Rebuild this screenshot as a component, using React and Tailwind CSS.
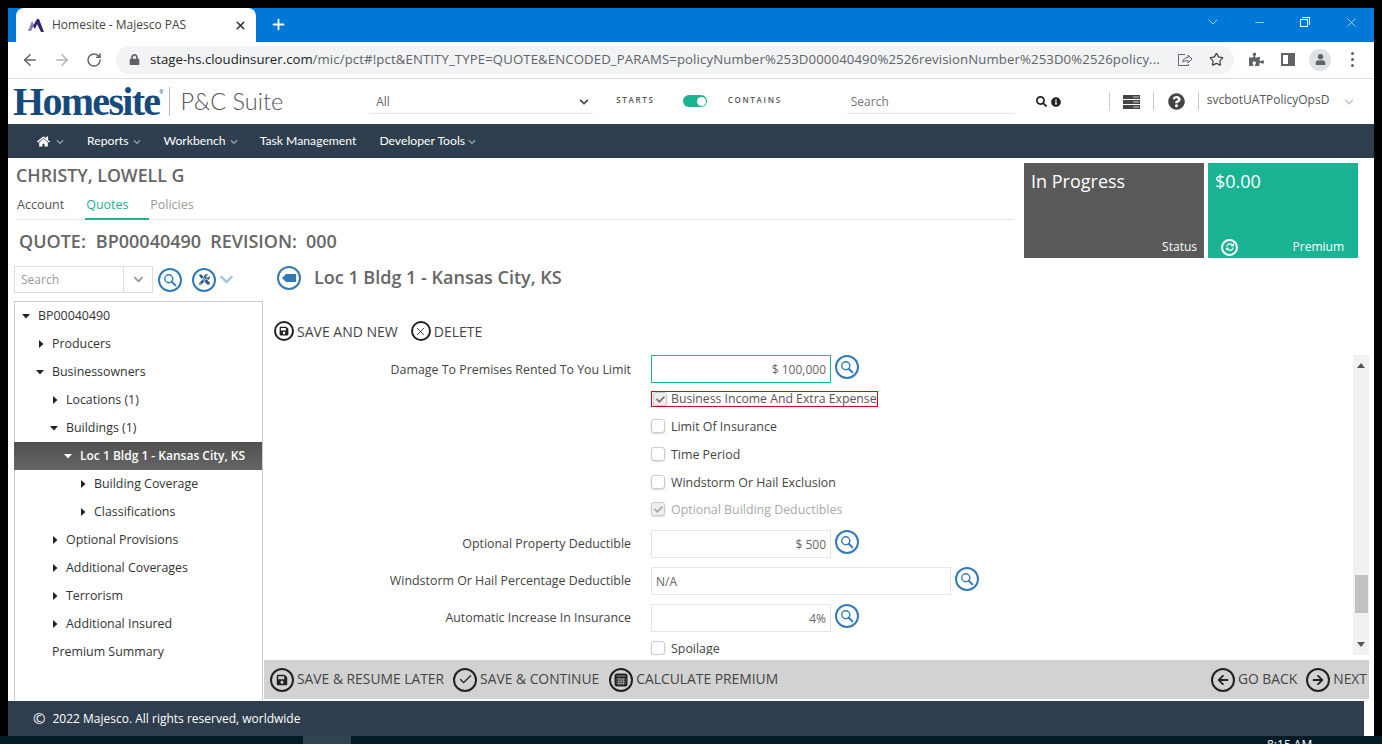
import React from "react";
import { ArrowLeft, ArrowRight, RotateCw, Star, ChevronDown, X, Minus, Plus, Check } from "lucide-react";
import {
  FaHome, FaSearch, FaInfoCircle, FaQuestionCircle, FaLock, FaPuzzlePiece, FaUser, FaCheck, FaSave,
  FaArrowLeft, FaArrowRight, FaSyncAlt, FaTools, FaChevronDown,
} from "react-icons/fa";

const Caret = ({ open, color = "#222" }) => (
  <svg width="8" height="8" viewBox="0 0 8 8" className="shrink-0">
    {open ? <path d="M0 2h8L4 6.5z" fill={color} /> : <path d="M2 0l4.5 4L2 8z" fill={color} />}
  </svg>
);

const NavChevron = () => <FaChevronDown size={8} className="text-[#9aa5b1]" />;

const LookupIcon = () => (
  <span className="flex h-[24px] w-[24px] shrink-0 items-center justify-center rounded-full border-2 border-[#337ab7] bg-white">
    <svg width="14" height="14" viewBox="0 0 14 14" fill="none" stroke="#337ab7">
      <circle cx="5.8" cy="5.8" r="4" strokeWidth="1.4" />
      <path d="M8.8 8.8l3.6 3.6" strokeWidth="2" strokeLinecap="round" />
    </svg>
  </span>
);

const ActionIcon = ({ children, size = "h-[24px] w-[24px]" }) => (
  <span className={`flex ${size} shrink-0 items-center justify-center rounded-full border-2 border-[#222] text-[#222]`}>
    {children}
  </span>
);

const Checkbox = ({ checked, faded }) => (
  <span
    className={`flex h-[14px] w-[14px] shrink-0 items-center justify-center rounded-[3px] border border-[#ccc] shadow-[0_1px_2px_rgba(0,0,0,0.15)] ${
      checked ? "bg-[#eee]" : "bg-white"
    }`}
  >
    {checked && <FaCheck size={9} className={faded ? "text-[#aaa]" : "text-[#777]"} />}
  </span>
);

const treeRows = [
  { label: "BP00040490", pad: "pl-[7px]", gap: "ml-[8px]", open: true },
  { label: "Producers", pad: "pl-[22px]", gap: "ml-[7px]" },
  { label: "Businessowners", pad: "pl-[21px]", gap: "ml-[8px]", open: true },
  { label: "Locations (1)", pad: "pl-[36px]", gap: "ml-[7px]" },
  { label: "Buildings (1)", pad: "pl-[35px]", gap: "ml-[8px]", open: true },
  { label: "Loc 1 Bldg 1 - Kansas City, KS", pad: "pl-[50px]", gap: "ml-[8px]", open: true, active: true },
  { label: "Building Coverage", pad: "pl-[64px]", gap: "ml-[7px]" },
  { label: "Classifications", pad: "pl-[64px]", gap: "ml-[7px]" },
  { label: "Optional Provisions", pad: "pl-[36px]", gap: "ml-[7px]" },
  { label: "Additional Coverages", pad: "pl-[36px]", gap: "ml-[7px]" },
  { label: "Terrorism", pad: "pl-[36px]", gap: "ml-[7px]" },
  { label: "Additional Insured", pad: "pl-[36px]", gap: "ml-[7px]" },
  { label: "Premium Summary", pad: "pl-[37px]", gap: "ml-0", leaf: true },
];

const TreeRow = ({ row }) => (
  <div
    className={`flex h-[28px] items-center ${row.pad} ${
      row.active ? "-ml-px bg-gradient-to-b from-[#505050] to-[#666] text-[12px] font-semibold text-white" : "text-[#333]"
    }`}
  >
    {!row.leaf && <Caret open={row.open} color={row.active ? "#fff" : "#222"} />}
    <span className={row.gap}>{row.label}</span>
  </div>
);

const FieldRow = ({ label, value, wide, left, active, className = "" }) => (
  <div className={`flex items-center ${className}`}>
    <div className={`w-[367px] text-right text-[#444] ${active ? "pt-[2px]" : ""}`}>{label}</div>
    <div
      className={`ml-[20px] flex h-[28px] items-center border px-[4px] pt-[2px] text-[12px] text-[#666] ${
        wide ? "w-[300px]" : "w-[180px]"
      } ${left ? "justify-start" : "justify-end"} ${active ? "border-[#1ab394]" : "border-[#e5e5e5]"}`}
    >
      {value}
    </div>
    <span className="mb-[4px] ml-[4px]">
      <LookupIcon />
    </span>
  </div>
);

const CheckRow = ({ label, checked, faded, className }) => (
  <div className={`ml-[387px] flex items-center gap-[6px] ${faded ? "text-[#aaa]" : "text-[#444]"} ${className}`}>
    <Checkbox checked={checked} faded={faded} />
    <span className="pt-[2px]">{label}</span>
  </div>
);

const CalcIcon = () => (
  <svg width="14" height="14" viewBox="0 0 14 14">
    <rect x="0.5" y="0.5" width="13" height="13" rx="2.5" fill="#222" />
    <path d="M2.5 3h9M2.5 6h9M2.5 8.2h9M2.5 10.4h9M4.7 5v7M7 5v7M9.3 5v7" stroke="#bbb" strokeWidth="0.7" />
  </svg>
);

export default function App() {
  return (
    <div className="flex h-[744px] w-[1382px] flex-col overflow-hidden bg-black pt-[8px] font-['Open_Sans',sans-serif] text-[12px]">
      <div className="mx-[8px] flex flex-1 flex-col overflow-hidden bg-white">
        {/* browser tabs */}
        <div className="flex h-[34px] shrink-0 items-end bg-[#0078d7] text-white">
          <div className="ml-[8px] flex h-[34px] w-[240px] items-center rounded-t-[8px] bg-white pl-[12px] text-[#444]">
            <svg width="17" height="15" viewBox="0 0 17 15">
              <path d="M0 13L4 3l2 4-3 6z" fill="#8f7bb8" />
              <path d="M5 8l4-7h2l5 13h-3L9 6l-2 5z" fill="#2c2570" />
            </svg>
            <span className="ml-[7px] flex-1 text-[12px] leading-none">Homesite - Majesco PAS</span>
            <X size={13} strokeWidth={3} className="mr-[9px] text-[#333]" />
          </div>
          <Plus size={17} strokeWidth={2.5} className="mb-[9px] ml-[14px]" />
          <div className="mb-[12px] ml-auto flex items-center text-white">
            <ChevronDown size={16} strokeWidth={1} className="mr-[32px]" />
            <Minus size={13} strokeWidth={1.2} className="mr-[34px]" />
            <span className="relative mr-[34px] h-[10px] w-[10px]">
              <span className="absolute bottom-0 left-0 h-[8px] w-[8px] border border-white bg-[#0078d7]" />
              <span className="absolute right-0 top-0 h-[8px] w-[8px] border-r border-t border-white" />
            </span>
            <X size={15} strokeWidth={1} className="mr-[15px]" />
          </div>
        </div>

        {/* browser toolbar */}
        <div className="flex h-[37px] shrink-0 items-center border-b border-[#dcdcdc] bg-white pb-[1px] text-[#5f6368]">
          <ArrowLeft size={18} strokeWidth={2} className="ml-[13px]" />
          <ArrowRight size={18} strokeWidth={2} className="ml-[14px] text-[#b0b3b8]" />
          <RotateCw size={16} strokeWidth={2.2} className="ml-[15px]" />
          <div className="ml-[14px] flex h-[28px] w-[1118px] items-center rounded-full bg-[#f1f3f4] pl-[13px]">
            <FaLock size={11} className="shrink-0" />
            <span className="ml-[10px] w-[1016px] shrink-0 whitespace-nowrap text-[13.2px] leading-none">
              <span className="text-[#222]">stage-hs.cloudinsurer.com</span>
              <span className="tracking-[0.11px]">
                /mic/pct#!pct&amp;ENTITY_TYPE=QUOTE&amp;ENCODED_PARAMS=policyNumber%253D000040490%2526revisionNumber%253D0%2526policy...
              </span>
            </span>
            <svg width="16" height="14" viewBox="0 0 16 14" fill="none" stroke="currentColor" className="ml-[11px] shrink-0">
              <path d="M5.5 9c.5-3 3-4.5 5.5-4.5V2l4 4-4 4V7.5C9 7.5 7 8 5.5 9z" />
              <path d="M8 1.5H1.5v11h10V11" />
            </svg>
            <Star size={15} strokeWidth={2} className="ml-[16px] shrink-0 text-[#444]" />
          </div>
          <FaPuzzlePiece size={15} className="ml-[15px]" />
          <span className="ml-[17px] flex h-[13px] w-[14px] justify-end border-2 border-[#5f6368]">
            <span className="h-full w-[5px] bg-[#5f6368]" />
          </span>
          <span className="ml-[14px] flex h-[22px] w-[22px] items-center justify-center rounded-full bg-[#dee1e6]">
            <FaUser size={11} />
          </span>
          <span className="ml-[20px] flex flex-col gap-[3px]">
            <span className="h-[3px] w-[3px] rounded-full bg-[#5f6368]" />
            <span className="h-[3px] w-[3px] rounded-full bg-[#5f6368]" />
            <span className="h-[3px] w-[3px] rounded-full bg-[#5f6368]" />
          </span>
        </div>

        {/* app header */}
        <div className="flex h-[45px] shrink-0 items-center text-[#555]">
          <span className="ml-[5px] font-['Liberation_Serif',serif] text-[40px] font-bold leading-none tracking-[-1.7px] text-[#174a7c]">
            Homesite
          </span>
          <span className="mb-[18px] text-[5px] text-[#174a7c]">®</span>
          <span className="ml-[5px] h-[29px] w-px bg-[#bbb]" />
          <span className="ml-[11px] font-['Lato',sans-serif] text-[23.5px] font-light leading-none text-[#555]">P&amp;C Suite</span>
          <div className="mb-[10px] ml-[87px] flex h-[30px] w-[223px] items-center justify-between self-end border-b border-[#e5e5e5] pl-[6px] pr-[4px] pt-[6px] text-[#666]">
            <span>All</span>
            <FaChevronDown size={10} className="text-[#444]" />
          </div>
          <span className="mb-[4px] ml-[23px] text-[8px] font-semibold tracking-[1.7px] text-[#555]">STARTS</span>
          <span className="mb-[1px] ml-[28px] flex h-[12px] w-[24px] items-center justify-end rounded-full bg-[#1ab394] pr-[1px]">
            <span className="h-[9px] w-[9px] rounded-full bg-white" />
          </span>
          <span className="mb-[4px] ml-[21px] text-[8px] font-semibold tracking-[1.7px] text-[#555]">CONTAINS</span>
          <div className="mb-[10px] ml-[65px] flex h-[30px] w-[167px] items-center self-end border-b border-[#e5e5e5] pl-[4px] pt-[6px] text-[#777]">Search</div>
          <FaSearch size={11} className="ml-[22px] text-[#222]" />
          <FaInfoCircle size={10} className="ml-[4px] text-[#222]" />
          <span className="ml-[48px] h-[19px] w-px bg-[#ccc]" />
          <span className="ml-[13px] flex w-[17px] flex-col gap-[1px]">
            <span className="flex h-[4px] justify-end bg-[#444] pr-[1px] pt-[1px]"><span className="h-[2px] w-[6px] bg-[#888]" /></span>
            <span className="flex h-[4px] justify-end bg-[#444] pr-[1px] pt-[1px]"><span className="h-[2px] w-[6px] bg-[#888]" /></span>
            <span className="flex h-[4px] justify-end bg-[#444] pr-[1px] pt-[1px]"><span className="h-[2px] w-[6px] bg-[#888]" /></span>
          </span>
          <span className="ml-[13px] h-[19px] w-px bg-[#ccc]" />
          <FaQuestionCircle size={17} className="ml-[14px] text-[#444]" />
          <span className="ml-[13px] h-[19px] w-px bg-[#ccc]" />
          <span className="mb-[3px] ml-[8px] text-[12px] text-[#555]">svcbotUATPolicyOpsD</span>
          <FaChevronDown size={10} className="ml-[15px] text-[#ccc]" />
        </div>

        {/* nav */}
        <div className="flex h-[34px] shrink-0 items-center bg-[#2f3e4e] pl-[29px] pt-[1px] font-['Lato',sans-serif] text-[12.2px] text-white">
          <FaHome size={13} />
          <span className="ml-[6px]"><NavChevron /></span>
          <span className="ml-[23px]">Reports</span>
          <span className="ml-[4px]"><NavChevron /></span>
          <span className="ml-[23px]">Workbench</span>
          <span className="ml-[4px]"><NavChevron /></span>
          <span className="ml-[22px]">Task Management</span>
          <span className="ml-[23px]">Developer Tools</span>
          <span className="ml-[3px]"><NavChevron /></span>
        </div>

        {/* summary */}
        <div className="flex h-[104px] shrink-0">
          <div className="w-[1006px] pl-[8px] pt-[7px]">
            <div className="text-[17.8px] font-semibold leading-[20px] text-[#666]">CHRISTY, LOWELL G</div>
            <div className="mt-[6px] flex h-[29px] w-[998px] items-stretch border-b border-[#e5e5e5] text-[12.5px] text-[#777]">
              <span className="pl-[1px] pt-[5px] text-[#555]">Account</span>
              <span className="ml-[21px] h-[29px] w-[64px] border-b-2 border-[#1ab394] pl-[1px] pt-[5px] font-medium text-[#1ab394]">Quotes</span>
              <span className="ml-[1px] pt-[5px] text-[#999]">Policies</span>
            </div>
            <div className="ml-[3px] mt-[9px] flex text-[18px] font-semibold leading-[24px] text-[#666]">
              <span>QUOTE:</span>
              <span className="ml-[10px]">BP00040490</span>
              <span className="ml-[9px]">REVISION:</span>
              <span className="ml-[9px]">000</span>
            </div>
          </div>
          <div className="ml-[10px] mt-[5px] flex h-[95px] w-[180px] flex-col justify-between bg-[#595959] px-[7px] pb-[2px] pt-[6px] text-white">
            <span className="text-[18px] leading-[24px]">In Progress</span>
            <span className="self-end">Status</span>
          </div>
          <div className="ml-[4px] mt-[5px] flex h-[95px] w-[150px] flex-col justify-between bg-[#1ab394] px-[7px] pb-[2px] pt-[6px] text-white">
            <span className="text-[18px] leading-[24px]">$0.00</span>
            <div className="flex items-center justify-between pl-[6px] pr-[7px]">
              <span className="flex h-[17px] w-[17px] items-center justify-center rounded-full border-2 border-white">
                <FaSyncAlt size={8} />
              </span>
              <span>Premium</span>
            </div>
          </div>
        </div>

        {/* workspace */}
        <div className="flex min-h-0 flex-1 text-[#444]">
          <aside className="ml-[6px] flex w-[250px] shrink-0 flex-col pt-[4px]">
            <div className="flex h-[27px] items-center">
              <div className="flex h-[27px] w-[139px] items-center border border-[#ddd] text-[#999]">
                <span className="flex-1 pl-[6px]">Search</span>
                <span className="flex h-full w-[29px] items-center justify-center border-l border-[#ddd]">
                  <FaChevronDown size={11} className="text-[#999]" />
                </span>
              </div>
              <span className="ml-[5px]"><LookupIcon /></span>
              <span className="ml-[10px] flex h-[24px] w-[24px] items-center justify-center rounded-full border-2 border-[#337ab7] text-[#2c5e88]">
                <FaTools size={11} />
              </span>
              <FaChevronDown size={15} className="ml-[3px] text-[#a9c4dd]" />
            </div>
            <div className="mt-[8px] w-[249px] flex-1 border-x border-t border-[#ccc] text-[12.4px]">
              {treeRows.map((row) => (
                <TreeRow key={row.label} row={row} />
              ))}
            </div>
          </aside>

          <main className="flex min-w-0 flex-1 flex-col pr-[5px]">
            <div className="flex h-[32px] shrink-0 items-center pl-[13px]">
              <span className="flex h-[24px] w-[24px] items-center justify-center rounded-full border-2 border-[#337ab7]">
                <svg width="14" height="8" viewBox="0 0 14 8"><path d="M0 4l4-4h10v8H4z" fill="#337ab7" /></svg>
              </span>
              <h1 className="ml-[13px] pb-[2px] text-[18px] font-semibold leading-none text-[#666]">Loc 1 Bldg 1 - Kansas City, KS</h1>
            </div>
            <div className="mt-[23px] flex h-[28px] shrink-0 items-center pl-[10px] text-[14px] text-[#444]">
              <ActionIcon size="h-[20px] w-[20px]"><FaSave size={10} /></ActionIcon>
              <span className="ml-[3px]">SAVE AND NEW</span>
              <span className="ml-[13px]"><ActionIcon size="h-[20px] w-[20px]"><X size={13} strokeWidth={1.5} /></ActionIcon></span>
              <span className="ml-[3px]">DELETE</span>
            </div>

            <div className="mt-[10px] flex h-[300px] shrink-0 overflow-hidden text-[12.4px]">
              <div className="min-w-0 flex-1 overflow-hidden">
                <FieldRow label="Damage To Premises Rented To You Limit" value="$ 100,000" active />
                <div className="ml-[387px] mt-[8px] flex h-[16px] w-[227px] items-center gap-[4px] border border-[#e8000b] pl-[1px] text-[12.25px] text-[#555]">
                  <Checkbox checked />
                  <span className="whitespace-nowrap">Business Income And Extra Expense</span>
                </div>
                <CheckRow label="Limit Of Insurance" className="mt-[10px] h-[18px]" />
                <CheckRow label="Time Period" className="mt-[10px] h-[18px]" />
                <CheckRow label="Windstorm Or Hail Exclusion" className="mt-[10px] h-[18px]" />
                <CheckRow label="Optional Building Deductibles" checked faded className="mt-[9px] h-[18px]" />
                <FieldRow label="Optional Property Deductible" value="$ 500" className="mt-[12px]" />
                <FieldRow label="Windstorm Or Hail Percentage Deductible" value="N/A" wide left className="mt-[9px]" />
                <FieldRow label="Automatic Increase In Insurance" value="4%" className="mt-[9px]" />
                <CheckRow label="Spoilage" className="mt-[7px] h-[18px]" />
              </div>
              <div className="relative w-[16px] shrink-0 bg-[#f1f1f1]">
                <svg width="8" height="5" viewBox="0 0 8 5" className="absolute left-[4px] top-[8px]"><path d="M0 5h8L4 0z" fill="#555" /></svg>
                <span className="absolute left-[2px] right-px top-[220px] h-[38px] bg-[#c1c1c1]" />
                <svg width="8" height="5" viewBox="0 0 8 5" className="absolute bottom-[8px] left-[4px]"><path d="M0 0h8L4 5z" fill="#555" /></svg>
              </div>
            </div>

            <div className="mt-[5px] flex h-[39px] shrink-0 items-center bg-[#d2d2d2] pl-[6px] text-[13.85px] text-[#444]">
              <ActionIcon><FaSave size={12} /></ActionIcon>
              <span className="ml-[3px]">SAVE &amp; RESUME LATER</span>
              <span className="ml-[9px]"><ActionIcon><Check size={15} strokeWidth={2.2} /></ActionIcon></span>
              <span className="ml-[3px]">SAVE &amp; CONTINUE</span>
              <span className="ml-[10px]"><ActionIcon><CalcIcon /></ActionIcon></span>
              <span className="ml-[3px]">CALCULATE PREMIUM</span>
              <span className="ml-auto"><ActionIcon><FaArrowLeft size={12} /></ActionIcon></span>
              <span className="ml-[3px]">GO BACK</span>
              <span className="ml-[9px]"><ActionIcon><FaArrowRight size={12} /></ActionIcon></span>
              <span className="ml-[3px] pr-[2px]">NEXT</span>
            </div>
          </main>
        </div>

        {/* footer */}
        <div className="mt-[1px] flex h-[35px] w-[1356px] shrink-0 items-center bg-[#2f3e4e] pl-[25px] text-white">
          <span className="text-[15px] leading-none">©</span>
          <span className="ml-[7px]">2022 Majesco. All rights reserved, worldwide</span>
        </div>
      </div>

      {/* taskbar, cut off by the bottom of the window */}
      <div className="flex h-[8px] shrink-0 overflow-hidden bg-[#021b26]">
        <span className="ml-[303px] h-full w-[48px] bg-[#2f4650]" />
        <span className="ml-[916px] mt-[2px] text-[12px] leading-[14px] text-white">8:15 AM</span>
      </div>
    </div>
  );
}
